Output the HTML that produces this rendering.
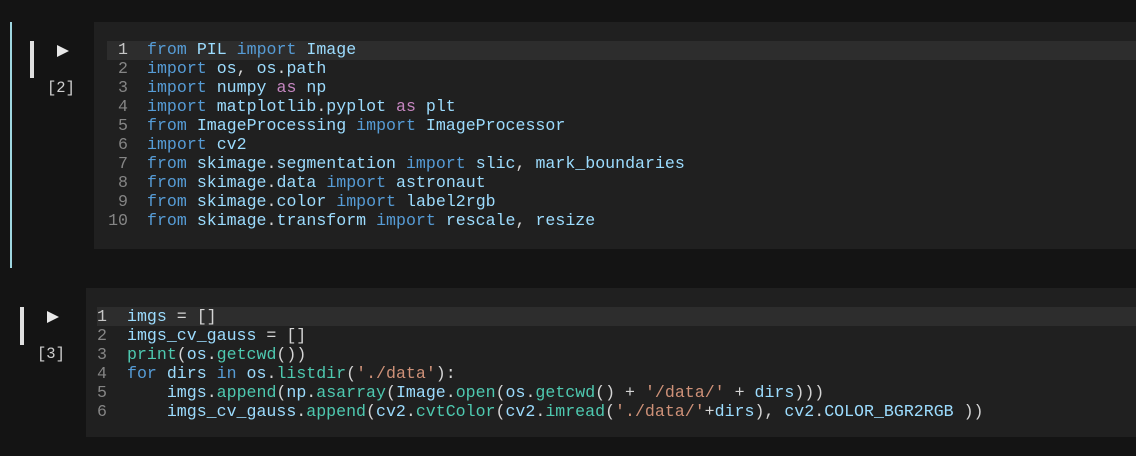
<!DOCTYPE html>
<html><head><style>
body{margin:0;width:1136px;height:456px;background:#141414;position:relative;overflow:hidden;font-family:"Liberation Mono",monospace;}
.abs{position:absolute}
.cell{position:absolute;background:#202020;right:0}
.code{position:absolute;font-size:16.6px;line-height:19px;white-space:pre;color:#d4d4d4}
.ln{position:absolute;font-size:16.6px;line-height:19px;white-space:pre;color:#858585;text-align:right}
.hl{position:absolute;background:#2d2d2d;right:0;height:19px}
.k{color:#569cd6}.v{color:#9cdcfe}.f{color:#4ec9b0}.s{color:#ce9178}.p{color:#c586c0}
.num{position:absolute;color:#cfcfcf;font-size:15.5px}
.play{position:absolute;width:0;height:0;border-left:12px solid #e8e8e8;border-top:6.5px solid transparent;border-bottom:6.5px solid transparent}
.bar{position:absolute;width:4px;background:#e0e0e0}
</style></head><body>
<div class="abs" style="left:10px;top:22px;width:2px;height:246px;background:#9fd6e0"></div>
<div class="bar" style="left:30px;top:41px;height:37px"></div>
<div class="play" style="left:57px;top:45px"></div>
<div class="num" style="left:47px;top:79px">[2]</div>
<div class="cell" style="left:94px;top:22px;height:227px"></div>
<div class="hl" style="left:107px;top:41px"></div>
<div class="ln" style="left:100px;width:28px;top:40px"><span style="color:#c6c6c6">1</span>
2
3
4
5
6
7
8
9
10</div>
<div class="code" style="left:147px;top:40px"><span class="k">from</span> <span class="v">PIL</span> <span class="k">import</span> <span class="v">Image</span>
<span class="k">import</span> <span class="v">os</span>, <span class="v">os</span>.<span class="v">path</span>
<span class="k">import</span> <span class="v">numpy</span> <span class="p">as</span> <span class="v">np</span>
<span class="k">import</span> <span class="v">matplotlib</span>.<span class="v">pyplot</span> <span class="p">as</span> <span class="v">plt</span>
<span class="k">from</span> <span class="v">ImageProcessing</span> <span class="k">import</span> <span class="v">ImageProcessor</span>
<span class="k">import</span> <span class="v">cv2</span>
<span class="k">from</span> <span class="v">skimage</span>.<span class="v">segmentation</span> <span class="k">import</span> <span class="v">slic</span>, <span class="v">mark_boundaries</span>
<span class="k">from</span> <span class="v">skimage</span>.<span class="v">data</span> <span class="k">import</span> <span class="v">astronaut</span>
<span class="k">from</span> <span class="v">skimage</span>.<span class="v">color</span> <span class="k">import</span> <span class="v">label2rgb</span>
<span class="k">from</span> <span class="v">skimage</span>.<span class="v">transform</span> <span class="k">import</span> <span class="v">rescale</span>, <span class="v">resize</span></div>

<div class="bar" style="left:20px;top:307px;height:38px"></div>
<div class="play" style="left:47px;top:311px"></div>
<div class="num" style="left:37px;top:345px">[3]</div>
<div class="cell" style="left:86px;top:288px;height:149px"></div>
<div class="hl" style="left:97px;top:307px"></div>
<div class="ln" style="left:97px;width:18px;top:307px;text-align:left"><span style="color:#c6c6c6">1</span>
2
3
4
5
6</div>
<div class="code" style="left:127px;top:307px"><span class="v">imgs</span> = []
<span class="v">imgs_cv_gauss</span> = []
<span class="f">print</span>(<span class="v">os</span>.<span class="f">getcwd</span>())
<span class="k">for</span> <span class="v">dirs</span> <span class="k">in</span> <span class="v">os</span>.<span class="f">listdir</span>(<span class="s">'./data'</span>):
    <span class="v">imgs</span>.<span class="f">append</span>(<span class="v">np</span>.<span class="f">asarray</span>(<span class="v">Image</span>.<span class="f">open</span>(<span class="v">os</span>.<span class="f">getcwd</span>() + <span class="s">'/data/'</span> + <span class="v">dirs</span>)))
    <span class="v">imgs_cv_gauss</span>.<span class="f">append</span>(<span class="v">cv2</span>.<span class="f">cvtColor</span>(<span class="v">cv2</span>.<span class="f">imread</span>(<span class="s">'./data/'</span>+<span class="v">dirs</span>), <span class="v">cv2</span>.<span class="v">COLOR_BGR2RGB</span> ))</div>
</body></html>
